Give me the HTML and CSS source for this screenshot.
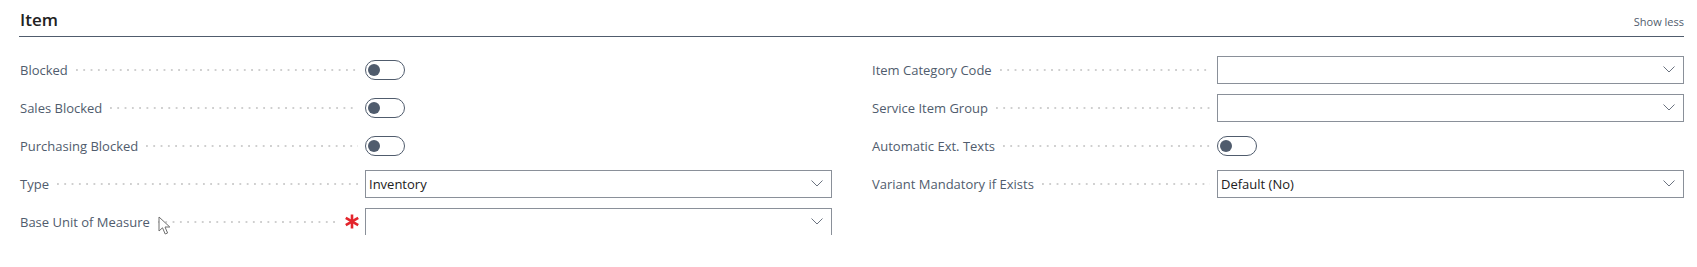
FILE: index.html
```html
<!DOCTYPE html>
<html lang="en">
<head>
<meta charset="utf-8">
<title>Item</title>
<link rel="stylesheet" href="styles.css">
</head>
<body>
<section class="group">
  <header class="group-header">
    <h2 class="group-title">Item</h2>
    <a class="show-less">Show less</a>
  </header>
  <div class="columns">
    <div class="col">
      <div class="field">
        <div class="label"><span class="label-text">Blocked</span><span class="leader"></span></div>
        <div class="control"><span class="toggle"><span class="knob"></span></span></div>
      </div>
      <div class="field">
        <div class="label"><span class="label-text">Sales Blocked</span><span class="leader"></span></div>
        <div class="control"><span class="toggle"><span class="knob"></span></span></div>
      </div>
      <div class="field">
        <div class="label"><span class="label-text">Purchasing Blocked</span><span class="leader"></span></div>
        <div class="control"><span class="toggle"><span class="knob"></span></span></div>
      </div>
      <div class="field">
        <div class="label"><span class="label-text">Type</span><span class="leader"></span></div>
        <div class="control"><div class="select"><span class="select-value">Inventory</span><svg class="chev" width="12" height="7" viewBox="0 0 12 7"><path d="M0.5 0.5 L6 6 L11.5 0.5" fill="none" stroke="#6b7380" stroke-width="1"/></svg></div></div>
      </div>
      <div class="field">
        <div class="label label-required"><span class="label-text">Base Unit of Measure</span><span class="leader"></span>
          <svg class="req" width="14" height="15" viewBox="0 0 14 15"><g stroke="#e3242b" stroke-width="2.6" stroke-linecap="butt"><line x1="7" y1="0.5" x2="7" y2="14.5"/><line x1="0.8" y1="3.8" x2="13.2" y2="11.2"/><line x1="0.8" y1="11.2" x2="13.2" y2="3.8"/></g></svg>
          <svg class="cursor" width="16" height="20" viewBox="0 0 16 20"><path d="M1 1 L1 15 L4.5 11.8 L7.2 18 L9.6 17 L7 11 L11.8 11 Z" fill="#ffffff" fill-opacity="0.85" stroke="#6e6e6e" stroke-width="1" stroke-linejoin="round"/></svg>
        </div>
        <div class="control"><div class="select"><span class="select-value"></span><svg class="chev" width="12" height="7" viewBox="0 0 12 7"><path d="M0.5 0.5 L6 6 L11.5 0.5" fill="none" stroke="#6b7380" stroke-width="1"/></svg></div></div>
      </div>
    </div>
    <div class="col">
      <div class="field">
        <div class="label"><span class="label-text">Item Category Code</span><span class="leader"></span></div>
        <div class="control"><div class="select"><span class="select-value"></span><svg class="chev" width="12" height="7" viewBox="0 0 12 7"><path d="M0.5 0.5 L6 6 L11.5 0.5" fill="none" stroke="#6b7380" stroke-width="1"/></svg></div></div>
      </div>
      <div class="field">
        <div class="label"><span class="label-text">Service Item Group</span><span class="leader"></span></div>
        <div class="control"><div class="select"><span class="select-value"></span><svg class="chev" width="12" height="7" viewBox="0 0 12 7"><path d="M0.5 0.5 L6 6 L11.5 0.5" fill="none" stroke="#6b7380" stroke-width="1"/></svg></div></div>
      </div>
      <div class="field">
        <div class="label"><span class="label-text">Automatic Ext. Texts</span><span class="leader"></span></div>
        <div class="control"><span class="toggle"><span class="knob"></span></span></div>
      </div>
      <div class="field">
        <div class="label"><span class="label-text">Variant Mandatory if Exists</span><span class="leader"></span></div>
        <div class="control"><div class="select"><span class="select-value">Default (No)</span><svg class="chev" width="12" height="7" viewBox="0 0 12 7"><path d="M0.5 0.5 L6 6 L11.5 0.5" fill="none" stroke="#6b7380" stroke-width="1"/></svg></div></div>
      </div>
    </div>
  </div>
</section>
</body>
</html>
```
FILE: styles.css
```css
* { box-sizing: border-box; }
html, body { margin: 0; padding: 0; background: #ffffff; }
body {
  font-family: "Segoe UI", "Open Sans", "Noto Sans", sans-serif;
  color: #505c6d;
}
.group {
  padding: 0 13px 0 20px;
}
.group-header {
  display: flex;
  align-items: flex-end;
  justify-content: space-between;
  padding-top: 8px;
  padding-bottom: 4px;
  border-bottom: 1px solid #505c6d;
  margin-left: -1px;
}
.group-title {
  margin: 0 0 0 1px;
  font-size: 17px;
  font-weight: 600;
  line-height: 24px;
  color: #212121;
}
.show-less {
  font-size: 11px;
  line-height: 16px;
  color: #505c6d;
  padding-bottom: 2px;
}
.columns {
  display: grid;
  grid-template-columns: 1fr 1fr;
  column-gap: 40px;
  padding-top: 18px;
}
.col {
  display: flex;
  flex-direction: column;
  gap: 10px;
}
.field {
  display: grid;
  grid-template-columns: 345px 1fr;
  height: 28px;
  align-items: center;
}
.label {
  position: relative;
  display: flex;
  align-items: center;
  height: 28px;
  font-size: 13px;
  color: #505c6d;
  padding-right: 7px;
  padding-top: 2px;
}
.label-text { white-space: nowrap; }
.leader {
  flex: 1;
  height: 2px;
  margin-left: 8px;
  background-image: linear-gradient(to right, #cfcfcf 2px, transparent 2px);
  background-size: 7.3px 2px;
  background-repeat: repeat-x;
}
.label-required { padding-right: 6px; }
.label-required .leader { margin-right: 10px; }
.req { flex: none; margin-top: -2px; }
.cursor {
  position: absolute;
  left: 138px;
  top: 9px;
}
.control { display: flex; align-items: center; height: 28px; padding-top: 1px; }
.toggle {
  display: flex;
  align-items: center;
  width: 40px;
  height: 20px;
  border: 1px solid #505c6d;
  border-radius: 10px;
  padding-left: 2px;
}
.knob {
  width: 12px;
  height: 12px;
  border-radius: 50%;
  background: #505c6d;
}
.select {
  flex: 1;
  display: flex;
  align-items: center;
  justify-content: space-between;
  height: 28px;
  border: 1px solid #8a9099;
  padding: 0 8px 0 3px;
  background: #ffffff;
}
.select-value {
  font-size: 13px;
  color: #212121;
  white-space: nowrap;
}
.chev { flex: none; }
```
